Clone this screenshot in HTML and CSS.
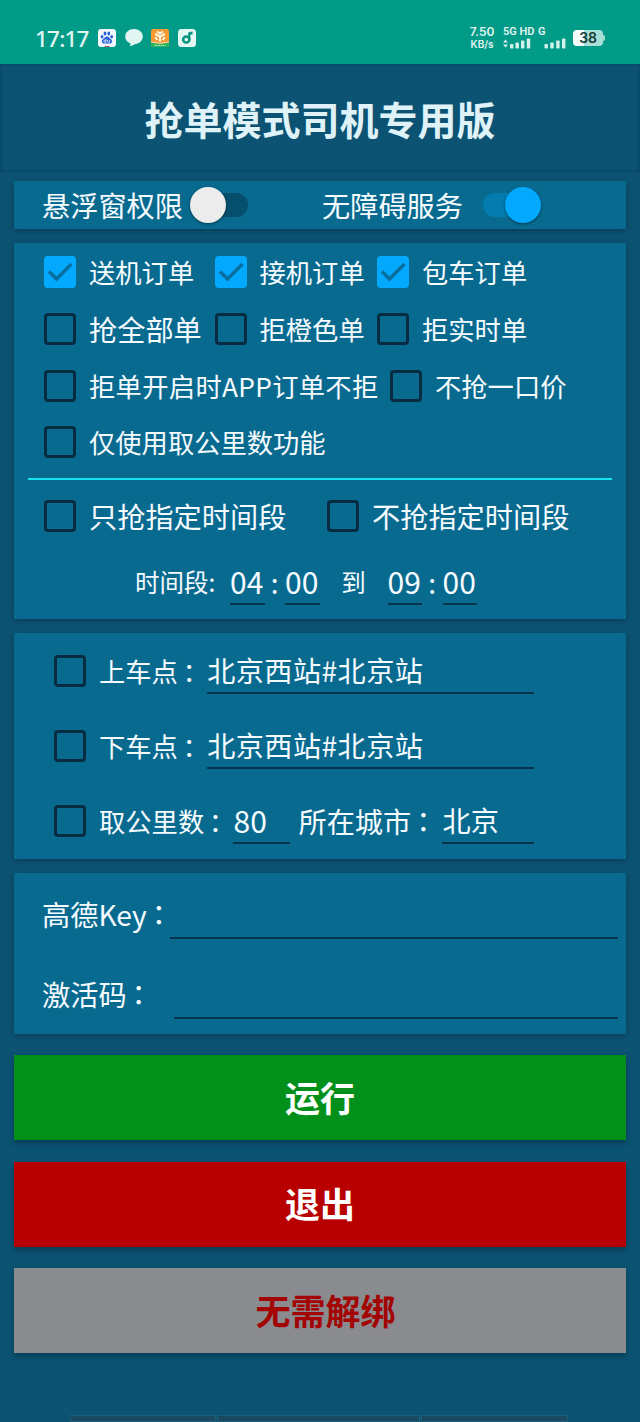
FILE: index.html
```
<!DOCTYPE html>
<html lang="zh-CN">
<head>
    <meta charset="UTF-8">
    <meta name="viewport" content="width=device-width, initial-scale=1.0">
    <title>抢单模式司机专用版</title>
    <link rel="stylesheet" href="styles.css">
</head>
<body>
    <div class="status-bar">
        <span class="clock">17:17</span>
        <div class="app-icons">
            <svg width="18" height="18" viewBox="0 0 18 18">
                <rect width="18" height="18" rx="3" fill="#f3f8ff"/>
                <g fill="#2c62d9">
                    <ellipse cx="4.1" cy="7.7" rx="1.4" ry="1.8"/>
                    <ellipse cx="7" cy="4.5" rx="1.4" ry="1.9"/>
                    <ellipse cx="10.8" cy="4.5" rx="1.4" ry="1.9"/>
                    <ellipse cx="13.7" cy="7.7" rx="1.4" ry="1.8"/>
                    <path d="M9 7.4c2 0 2.6 1.7 4 2.9 1.8 1.5 1.1 4.3-1.2 4.3H6.1c-2.3 0-3-2.8-1.2-4.3C6.3 9.1 7 7.4 9 7.4z"/>
                </g>
                <path d="M8 10v3.200H6.800a1 1 0 0 1 0-2H8M9.500 11v1.500q0 .8.8.8h1.200V11" fill="none" stroke="#f3f8ff" stroke-width=".7"/>
                <path d="M6.500 17.500h5" stroke="#b34a5a"/>
            </svg>
            <svg width="18" height="18" viewBox="0 0 18 18">
                <path d="M9 0c5 0 8.800 3.300 8.800 7.600S14 15.200 9.500 15.200c-1.300 1.200-3 1.800-4.900 1.800.7-.7 1-1.500.9-2.600C2.100 13.200.2 11 .2 7.600.2 3.300 4 0 9 0z" fill="#e0f5f2"/>
            </svg>
            <svg width="18" height="18" viewBox="0 0 18 18">
                <rect width="18" height="18" rx="2.500" fill="#f79a32"/>
                <path d="M0 13.500q9 2.500 18 0v2q0 2.500-2.500 2.500h-13Q0 18 0 15.500z" fill="#1fb25a"/>
                <path d="M0 13q9 2.500 18 0" fill="none" stroke="#f5f0d0" stroke-width=".8"/>
                <path d="M9 12.500V7.500M9 7.500L4.200 5M9 7.500L13.800 5M6 2.500l3 1.800 3-1.800M4.300 8.200l1.900 2.800M13.700 8.200l-1.900 2.800" fill="none" stroke="#fff6e8" stroke-width="2"/>
                <path d="M3.500 16.400h11" stroke="#d7f3d9" stroke-dasharray="1.500 .6"/>
            </svg>
            <svg width="18" height="18" viewBox="0 0 18 18">
                <rect width="18" height="18" rx="3.500" fill="#e3f7f4"/>
                <circle cx="8.300" cy="10.500" r="3.100" fill="none" stroke="#06937f" stroke-width="2.500"/>
                <path d="M10.200 9.500V4.500q0-1.200 1.200-1.400l3.200-.6v2.800l-2.200.5v4.700z" fill="#06937f"/>
            </svg>
        </div>
        <div class="net-speed"><span>7.50</span><span>KB/s</span></div>
        <div class="signal">
            <span class="signal-label">5G HD</span>
            <svg width="28" height="11" viewBox="0 0 28 11" fill="#d5f2ed">
                <path d="M0 4.500L2.500 1.500 5 4.500zM0 6.500h5L2.500 9.500z"/>
                <rect x="7" y="6" width="3.400" height="4.500" rx=".8"/>
                <rect x="12.500" y="4.500" width="3.400" height="6" rx=".8"/>
                <rect x="18" y="2.500" width="3.400" height="8" rx=".8"/>
                <rect x="23.800" y=".5" width="3.400" height="10" rx=".8"/>
            </svg>
        </div>
        <div class="signal second">
            <span class="signal-label">G</span>
            <svg width="28" height="11" viewBox="0 0 28 11" fill="#d5f2ed">
                <rect x="6.500" y="6" width="3.400" height="4.500" rx=".8"/>
                <rect x="12.300" y="4.500" width="3.400" height="6" rx=".8"/>
                <rect x="18.200" y="2.500" width="3.400" height="8" rx=".8"/>
                <rect x="24" y=".5" width="3.400" height="10" rx=".8"/>
            </svg>
        </div>
        <div class="battery">38</div>
    </div>

    <header class="header">
        <h1>抢单模式司机专用版</h1>
    </header>

    <main class="content">
        <section class="panel permissions">
            <span class="switch-label">悬浮窗权限</span>
            <span class="switch"></span>
            <span class="switch-label second">无障碍服务</span>
            <span class="switch on"></span>
        </section>

        <section class="panel orders">
            <div class="row three">
                <label class="check checked"><span class="box"><svg viewBox="0 0 32 32"><path d="M5 15.500l7.500 7.500L27.500 8"/></svg></span>送机订单</label>
                <label class="check checked"><span class="box"><svg viewBox="0 0 32 32"><path d="M5 15.500l7.500 7.500L27.500 8"/></svg></span>接机订单</label>
                <label class="check checked"><span class="box"><svg viewBox="0 0 32 32"><path d="M5 15.500l7.500 7.500L27.500 8"/></svg></span>包车订单</label>
            </div>
            <div class="row three">
                <label class="check large"><span class="box"></span>抢全部单</label>
                <label class="check"><span class="box"></span>拒橙色单</label>
                <label class="check"><span class="box"></span>拒实时单</label>
            </div>
            <div class="row reject">
                <label class="check wide"><span class="box"></span>拒单开启时APP订单不拒</label>
                <label class="check"><span class="box"></span>不抢一口价</label>
            </div>
            <div class="row">
                <label class="check"><span class="box"></span>仅使用取公里数功能</label>
            </div>
            <hr class="divider">
            <div class="row period">
                <label class="check large"><span class="box"></span>只抢指定时间段</label>
                <label class="check large"><span class="box"></span>不抢指定时间段</label>
            </div>
            <div class="time-row">
                <span class="time-label">时间段:</span>
                <input type="text" class="field" value="04">
                <span class="sep">:</span>
                <input type="text" class="field" value="00">
                <span class="to">到</span>
                <input type="text" class="field" value="09">
                <span class="sep">:</span>
                <input type="text" class="field" value="00">
            </div>
        </section>

        <section class="panel places">
            <div class="place-row">
                <label class="check"><span class="box"></span>上车点<span class="colon">：</span></label>
                <input type="text" class="field place" value="北京西站#北京站">
            </div>
            <div class="place-row">
                <label class="check"><span class="box"></span>下车点<span class="colon">：</span></label>
                <input type="text" class="field place" value="北京西站#北京站">
            </div>
            <div class="place-row">
                <label class="check"><span class="box"></span>取公里数<span class="colon">：</span></label>
                <input type="text" class="field distance" value="80">
                <span class="city-label">所在城市<span class="colon">：</span></span>
                <input type="text" class="field city" value="北京">
            </div>
        </section>

        <section class="panel keys">
            <div class="key-row">
                <span class="key-label">高德Key<span class="colon">：</span></span>
                <input type="text" class="field">
            </div>
            <div class="key-row code">
                <span class="key-label">激活码<span class="colon">：</span></span>
                <input type="text" class="field">
            </div>
        </section>

        <div class="actions">
            <button class="run">运行</button>
            <button class="exit">退出</button>
            <button class="unbind">无需解绑</button>
        </div>
    </main>

    <footer class="bottom-bar">
        <span></span>
        <span></span>
        <span></span>
    </footer>
</body>
</html>
```
FILE: styles.css
```
:root {
    --status: #029b87;
    --background: #0c5373;
    --panel: #096a90;
    --accent: #03a9ff;
    --dark: #062c42;
    --line: #18e2f0;
    --light: #f5fbff;
}

* {
    margin: 0;
    padding: 0;
    box-sizing: border-box;
}

body {
    width: 640px;
    height: 1422px;
    overflow: hidden;
    background: var(--background);
    color: var(--light);
    font-family: 'Noto Sans CJK SC', sans-serif;
    font-size: 26.300px;
    display: flex;
    flex-direction: column;
    white-space: nowrap;
}

.status-bar {
    height: 64px;
    flex: none;
    padding: 12px 35px 0;
    background: var(--status);
    display: flex;
    align-items: center;
    color: #e0f5f2;
    font-family: Inter, sans-serif;
}

.clock {
    width: 63px;
    font-family: 'Noto Sans', sans-serif;
    font-size: 22.500px;
    font-weight: 500;
    letter-spacing: -0.8px;
}

.app-icons {
    display: flex;
    gap: 8.700px;
}

.app-icons svg {
    display: block;
}

.net-speed {
    width: 28px;
    margin-left: 272px;
    display: flex;
    flex-direction: column;
    align-items: center;
    font-size: 10px;
    font-weight: 600;
    line-height: 12px;
}

.net-speed span:first-child {
    font-size: 12px;
}

.signal {
    width: 35px;
    margin-left: 7px;
    display: flex;
    flex-direction: column;
}

.signal svg {
    display: block;
}

.signal-label {
    height: 11px;
    line-height: 10px;
    font-family: Roboto, sans-serif;
    font-size: 11px;
    font-weight: 600;
}

.signal.second {
    width: 28px;
    margin-left: 0;
}

.battery {
    width: 30px;
    height: 16px;
    margin-left: 7px;
    border-radius: 4px;
    background: linear-gradient(to right, #f5fffd 38%, #a7dfd7 38%);
    color: #173b38;
    font-size: 14px;
    font-weight: 600;
    line-height: 16px;
    text-align: center;
    position: relative;
}

.battery::after {
    content: '';
    position: absolute;
    right: -2px;
    top: 5px;
    width: 2px;
    height: 6px;
    border-radius: 0 2px 2px 0;
    background: #a7dfd7;
}

.header {
    height: 108px;
    flex: none;
    padding-bottom: 1px;
    display: flex;
    align-items: center;
    justify-content: center;
    box-shadow: inset 0 0 4px rgba(0, 25, 45, 0.35);
}

.header h1 {
    font-size: 39px;
    font-weight: 700;
    line-height: 50px;
    color: #dff2f7;
}

.content {
    padding: 9px 14px 0;
    display: flex;
    flex-direction: column;
    gap: 14px;
}

.panel {
    background: var(--panel);
    box-shadow: 0 2px 6px rgba(0, 20, 40, 0.35);
}

.permissions {
    height: 48px;
    padding-left: 28px;
    display: flex;
    align-items: center;
    font-size: 28.200px;
}

.switch-label {
    width: 148px;
    line-height: 40px;
    padding-bottom: 1px;
}

.switch-label.second {
    width: 161px;
    margin-left: 74px;
}

.switch {
    width: 58px;
    height: 24px;
    display: flex;
    align-items: center;
    background: #064f6c;
    border-radius: 12px;
}

.switch::before {
    content: '';
    width: 36px;
    height: 36px;
    flex: none;
    border-radius: 50%;
    background: #ececec;
    box-shadow: 0 1px 3px rgba(0, 0, 0, 0.45);
}

.switch.on {
    justify-content: flex-end;
    background: #047caf;
}

.switch.on::before {
    background: var(--accent);
}

.orders {
    height: 376px;
    padding-top: 1px;
}

.row {
    height: 56.700px;
    padding-left: 30px;
    display: grid;
    align-items: center;
}

.three {
    grid-template-columns: 170.500px 162.500px auto;
}

.reject {
    grid-template-columns: 346px auto;
}

.period {
    grid-template-columns: 283px auto;
    height: 72px;
}

.check {
    display: flex;
    align-items: center;
    line-height: 40px;
}

.check.large {
    font-size: 28.200px;
}

.check.wide {
    letter-spacing: 0.3px;
}

.box {
    width: 32px;
    height: 32px;
    flex: none;
    margin-right: 13px;
    border: 3px solid var(--dark);
    border-radius: 4px;
}

.checked .box {
    border: none;
    background: var(--accent);
}

.box svg {
    display: block;
    fill: none;
    stroke: #0a6f9e;
    stroke-width: 3.500;
}

.divider {
    height: 2px;
    margin: 7px 14px 0;
    border: none;
    background: var(--line);
}

.field {
    height: 46px;
    min-width: 0;
    border: none;
    border-bottom: 2px solid #06334d;
    outline: none;
    background: transparent;
    color: inherit;
    font: inherit;
    font-size: 28.200px;
}

.time-row {
    height: 60px;
    padding-left: 121px;
    display: flex;
    align-items: center;
    font-size: 24.500px;
}

.time-row .field {
    width: 34.500px;
    font-size: 30px;
}

.time-label {
    width: 95px;
}

.sep {
    width: 20.500px;
    text-align: center;
    font-size: 28px;
    line-height: 40px;
}

.to {
    width: 68px;
    text-align: center;
}

.places {
    height: 226px;
}

.place-row {
    height: 75px;
    padding-left: 40px;
    display: flex;
    align-items: center;
}

.colon {
    display: inline-block;
    width: 1em;
    text-indent: -2px;
    font-family: 'Noto Sans CJK TC', sans-serif;
    text-spacing-trim: space-all;
}

.check .colon {
    padding-top: 2px;
}

.place-row .field {
    margin-left: 3px;
}

.place-row .place {
    width: 327px;
    letter-spacing: 0.4px;
}

.place-row .distance {
    width: 57px;
    font-size: 30px;
}

.city-label {
    margin-left: 8px;
    font-size: 28.200px;
}

.place-row .city {
    width: 92px;
}

.keys {
    height: 161px;
    padding: 3px 8px 0 28px;
}

.key-row {
    height: 80px;
    display: flex;
    align-items: center;
    font-size: 28.200px;
}

.key-label {
    width: 128px;
    padding-bottom: 5px;
}

.code .key-label {
    width: 132px;
}

.key-row .field {
    flex: 1;
}

.actions {
    padding-top: 7px;
    display: flex;
    flex-direction: column;
    gap: 21.500px;
}

button {
    height: 85px;
    padding-bottom: 3px;
    border: none;
    box-shadow: 0 3px 6px rgba(0, 20, 35, 0.4);
    color: white;
    font-family: inherit;
    font-size: 35px;
    font-weight: 700;
}

.run {
    background: #03901a;
}

.exit {
    background: #b80000;
}

.unbind {
    padding-left: 11px;
    background: #898b8f;
    color: #a30505;
}

.bottom-bar {
    margin: auto 70px 0;
    height: 7px;
    display: grid;
    grid-template-columns: 146px 203px 147px;
    gap: 1px;
}

.bottom-bar span {
    border: 1px solid #1a6079;
    background: #1c4962;
}
```
